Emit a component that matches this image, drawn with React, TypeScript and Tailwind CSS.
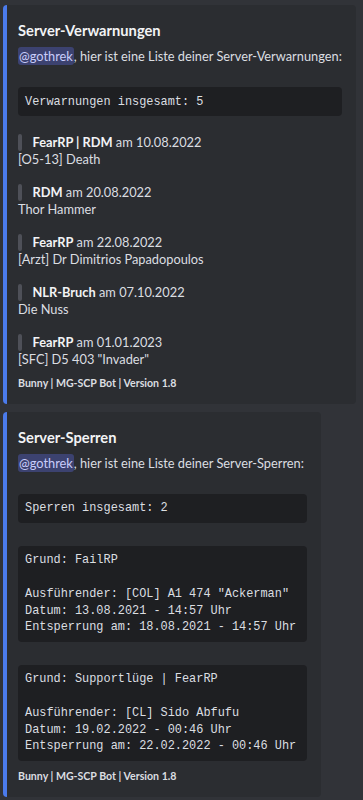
const warnings = [
  { reason: "FearRP | RDM", date: "10.08.2022", by: "[O5-13] Death" },
  { reason: "RDM", date: "20.08.2022", by: "Thor Hammer" },
  { reason: "FearRP", date: "22.08.2022", by: "[Arzt] Dr Dimitrios Papadopoulos" },
  { reason: "NLR-Bruch", date: "07.10.2022", by: "Die Nuss" },
  { reason: "FearRP", date: "01.01.2023", by: '[SFC] D5 403 "Invader"' },
]

const bans = [
  {
    reason: "FailRP",
    by: '[COL] A1 474 "Ackerman"',
    date: "13.08.2021 - 14:57 Uhr",
    until: "18.08.2021 - 14:57 Uhr",
  },
  {
    reason: "Supportlüge | FearRP",
    by: "[CL] Sido Abfufu",
    date: "19.02.2022 - 00:46 Uhr",
    until: "22.02.2022 - 00:46 Uhr",
  },
]

export default function App() {
  return (
    <div className="min-h-screen bg-[#313338] pl-[3px] pt-[5px] font-['Lato','Noto_Sans',sans-serif] text-[#dbdee1]">
      <Embed
        title="Server-Verwarnungen"
        intro="hier ist eine Liste deiner Server-Verwarnungen:"
        className="w-[353px]"
      >
        <CodeBlock lines={["Verwarnungen insgesamt: 5"]} />

        <div className="mt-[17.5px] flex flex-col gap-[16px]">
          {warnings.map((w, i) => (
            <div key={i} className="text-[12.8px] leading-[17px]">
              <div className="flex">
                <span className="w-[3.5px] shrink-0 rounded-[2px] bg-[#4e5058]" />
                <span className="pl-[11px]">
                  <b className="font-bold text-[#f2f3f5]">{w.reason}</b> am {w.date}
                </span>
              </div>
              <div>{w.by}</div>
            </div>
          ))}
        </div>
      </Embed>

      <Embed
        title="Server-Sperren"
        intro="hier ist eine Liste deiner Server-Sperren:"
        className="mt-[8px] w-[318px]"
      >
        <CodeBlock lines={["Sperren insgesamt: 2"]} />

        {bans.map((b, i) => (
          <div key={i} className="mt-[23px]">
            <CodeBlock
              lines={[
                `Grund: ${b.reason}`,
                "",
                `Ausführender: ${b.by}`,
                `Datum: ${b.date}`,
                `Entsperrung am: ${b.until}`,
              ]}
            />
          </div>
        ))}
      </Embed>
    </div>
  )
}

function Embed({
  title,
  intro,
  className,
  children,
}: {
  title: string
  intro: string
  className: string
  children: React.ReactNode
}) {
  return (
    <div
      className={`rounded-[4px] border-l-4 border-[#4b7bec] bg-[#2b2d31] pb-[14px] pl-[11px] pr-[14px] pt-[7px] ${className}`}
    >
      <h2 className="mt-[7px] text-[14.7px] font-bold leading-[22px] text-[#f2f3f5]">
        {title}
      </h2>

      <p className="mt-[7px] whitespace-nowrap text-[12.8px] leading-[17px]">
        <span className="rounded-[3px] bg-[#3c4270] px-[1px] py-[1px] text-[#c9cdfb]">
          @gothrek
        </span>
        , {intro}
      </p>

      <div className="mt-[22px]">{children}</div>

      <p className="mt-[8px] text-[10.6px] font-bold leading-[14px] text-[#dbdee1]">
        Bunny | MG-SCP Bot | Version 1.8
      </p>
    </div>
  )
}

function CodeBlock({ lines }: { lines: string[] }) {
  return (
    <pre className="rounded-[4px] bg-[#1e1f22] px-[7px] pb-[6px] pt-[6.5px] font-['Liberation_Mono',monospace] text-[11.9px] leading-[16.7px] text-[#dbdee1]">
      {lines.map((l, i) => (
        <div key={i}>{l === "" ? "\u00a0" : l}</div>
      ))}
    </pre>
  )
}
